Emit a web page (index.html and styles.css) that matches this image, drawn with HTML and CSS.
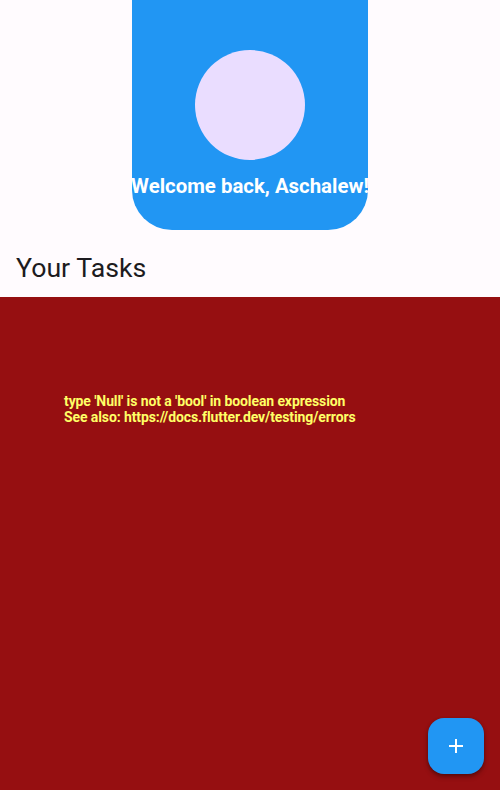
FILE: index.html
```html
<!DOCTYPE html>
<html>
<head>
<meta charset="utf-8">
<link rel="stylesheet" href="styles.css">
</head>
<body>
<div class="app">
  <header class="top">
    <div class="card">
      <div class="avatar"></div>
      <div class="welcome">Welcome back, Aschalew!</div>
    </div>
  </header>
  <h2 class="title">Your Tasks</h2>
  <section class="error">
    <div class="error-text">type 'Null' is not a 'bool' in boolean expression<br>See also: https://docs.flutter.dev/testing/errors</div>
  </section>
  <button class="fab" aria-label="Add">
    <svg width="24" height="24" viewBox="0 0 24 24"><path d="M19 13h-6v6h-2v-6H5v-2h6V5h2v6h6v2z" fill="#fff"/></svg>
  </button>
</div>
</body>
</html>
```
FILE: styles.css
```css
html, body {
  margin: 0;
  padding: 0;
  background: #fffbfe;
  font-family: Roboto, "Noto Sans", sans-serif;
}
.app {
  width: 500px;
  height: 790px;
  display: flex;
  flex-direction: column;
  position: relative;
  overflow: hidden;
}
.top {
  display: flex;
  justify-content: center;
}
.card {
  width: 236px;
  height: 230px;
  background: #2196f3;
  border-radius: 0 0 40px 40px;
  display: flex;
  flex-direction: column;
  align-items: center;
}
.avatar {
  width: 110px;
  height: 110px;
  border-radius: 50%;
  background: #eaddff;
  margin-top: 50px;
}
.welcome {
  margin-top: 14px;
  color: #fff;
  font-weight: 700;
  font-size: 20.4px;
  white-space: nowrap;
  letter-spacing: 0;
}
.title {
  margin: 22px 0 13px 16px;
  font-weight: 400;
  font-size: 26.7px;
  line-height: 32px;
  color: #1d1b20;
}
.error {
  flex: 1;
  background: #960f11;
  padding: 96px 0 0 64px;
}
.error-text {
  color: #ffff66;
  font-weight: 700;
  font-size: 14px;
  line-height: 16px;
  letter-spacing: -0.1px;
}
.fab {
  position: absolute;
  left: 428px;
  top: 718px;
  width: 56px;
  height: 56px;
  border: none;
  border-radius: 16px;
  background: #2196f3;
  display: flex;
  align-items: center;
  justify-content: center;
  padding: 0;
  box-shadow: 0 3px 5px rgba(0,0,0,0.3), 0 1px 3px rgba(0,0,0,0.2);
}
```
